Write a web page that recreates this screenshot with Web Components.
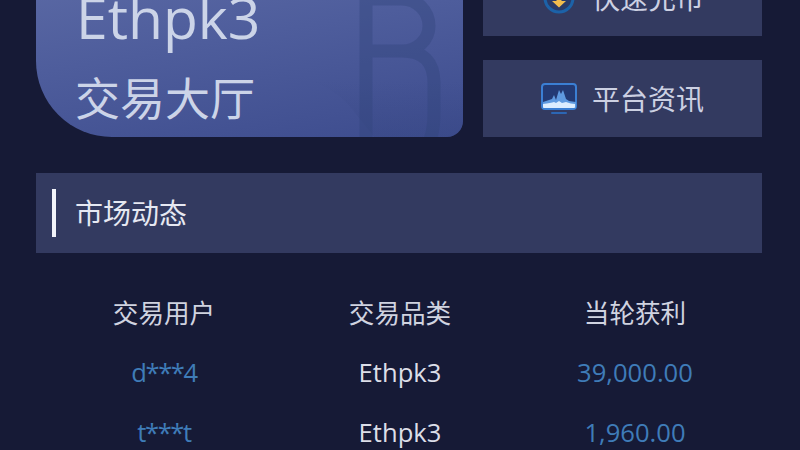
<!DOCTYPE html>
<html lang="zh">
<head>
<meta charset="utf-8">
<title>Ethpk3</title>
<style>
  html, body { margin: 0; height: 100%; background: #161a36; overflow: hidden; }
  body { font-family: "Open Sans", "Noto Sans CJK SC", sans-serif; }
</style>
</head>
<body>
<trade-page>
  <hero-card slot="hero" name="Ethpk3" label="交易大厅"></hero-card>
  <quick-button slot="actions" label="快速充币">
    <svg slot="icon" width="36" height="32" viewBox="0 0 36 32">
      <circle cx="18" cy="16" r="14" fill="#2a3a68" stroke="#1c62a8" stroke-width="3"/>
      <path d="M15.5 12h5v7h4.500l-7 6.500-7-6.500h4.500z" fill="#f2bc4e"/>
    </svg>
  </quick-button>
  <quick-button slot="actions" label="平台资讯">
    <svg slot="icon" width="36" height="32" viewBox="0 0 36 32">
      <rect x="1" y="1" width="34" height="25" rx="3" fill="#233a74" stroke="#3b7fd4" stroke-width="2"/>
      <path d="M2 19l6-2 3-1 2-4 2 5 3-10 2 4 2-4 3 9 3 2 7 1v6H2z" fill="#5f9ae0"/>
      <path d="M2 21q8-1 11-2l2 1 3-2 3 2 4-1q5 2 9 2v3a1 1 0 0 1-1 1H3a1 1 0 0 1-1-1z" fill="#dcedff"/>
      <rect x="10" y="29" width="16" height="2" rx="1" fill="#2c66b4"/>
    </svg>
  </quick-button>
  <section-bar slot="bar" label="市场动态"></section-bar>
  <market-row slot="table" head user="交易用户" item="交易品类" gain="当轮获利"></market-row>
  <market-row slot="table" user="d***4" item="Ethpk3" gain="39,000.00"></market-row>
  <market-row slot="table" user="t***t" item="Ethpk3" gain="1,960.00"></market-row>
</trade-page>

<script>
// page shell: the screenshot is scrolled, so the top row starts above the window
class TradePage extends HTMLElement {
  constructor() {
    super();
    this.attachShadow({ mode: 'open' });
    this.shadowRoot.innerHTML = `
      <style>
        :host { display: block; width: 800px; height: 450px; overflow: hidden; }
        .wrap { margin-top: -41px; padding: 0 38px 0 36px; }
        .top { display: grid; grid-template-columns: 427px 279px; column-gap: 20px; }
        .actions { display: flex; flex-direction: column; gap: 24px; }
        .bar { margin-top: 36px; }
        .table { margin-top: 29px; padding: 0 10px; }
      </style>
      <div class="wrap">
        <div class="top">
          <slot name="hero"></slot>
          <div class="actions"><slot name="actions"></slot></div>
        </div>
        <div class="bar"><slot name="bar"></slot></div>
        <div class="table"><slot name="table"></slot></div>
      </div>
    `;
  }
}

class HeroCard extends HTMLElement {
  constructor() {
    super();
    this.attachShadow({ mode: 'open' });
    this.shadowRoot.innerHTML = `
      <style>
        :host { display: block; position: relative; height: 178px; overflow: hidden;
          border-radius: 0 0 16px 76px;
          background: linear-gradient(170deg, #5d6ba6 0%, #4e5d9c 45%, #3d4c8e 100%); }
        svg { position: absolute; left: 0; top: 0; }
        .txt { position: relative; padding: 22px 0 0 40px; color: #ccd4e8; }
        .name { font-size: 57px; line-height: 72px; }
        .label { font-size: 45px; line-height: 62px; margin-top: 15px; margin-left: -1px; }
      </style>
      <svg width="427" height="178" viewBox="0 0 427 178">
        <defs>
          <linearGradient id="shade" x1="0" y1="0" x2="0" y2="1">
            <stop offset="0" stop-color="#35457f" stop-opacity="0"/>
            <stop offset="1" stop-color="#35457f" stop-opacity=".3"/>
          </linearGradient>
        </defs>
        <path d="M274 122q26 8 42 28t22 28H427V122z" fill="url(#shade)"/>
        <path d="M330 30V200M330 40H366a27 27 0 0 1 27 27a27 25 0 0 1-27 25H330M366 92q32 0 32 32v30q0 46-32 46H330"
          fill="none" stroke="#33447c" stroke-opacity=".42" stroke-width="13"/>
      </svg>
      <div class="txt">
        <div class="name"></div>
        <div class="label"></div>
      </div>
    `;
    this.shadowRoot.querySelector('.name').textContent = this.getAttribute('name');
    this.shadowRoot.querySelector('.label').textContent = this.getAttribute('label');
  }
}

class QuickButton extends HTMLElement {
  constructor() {
    super();
    this.attachShadow({ mode: 'open' });
    this.shadowRoot.innerHTML = `
      <style>
        :host { display: flex; height: 77px; align-items: center; justify-content: center; gap: 15px;
          background: #333a60; color: #ccd0e2; font-size: 28px; }
        .label { line-height: 40px; }
        ::slotted(svg) { display: block; }
      </style>
      <slot name="icon"></slot>
      <span class="label"></span>
    `;
    this.shadowRoot.querySelector('.label').textContent = this.getAttribute('label');
  }
}

class SectionBar extends HTMLElement {
  constructor() {
    super();
    this.attachShadow({ mode: 'open' });
    this.shadowRoot.innerHTML = `
      <style>
        :host { display: flex; align-items: center; height: 80px; padding-left: 16px;
          background: #333a60; color: #e6e8f2; font-size: 28px; }
        i { display: block; width: 4px; height: 48px; background: #f2f3f9; margin-right: 20px; }
        span { margin: -2px 0 0 -1px; }
      </style>
      <i></i><span class="label"></span>
    `;
    this.shadowRoot.querySelector('.label').textContent = this.getAttribute('label');
  }
}

class MarketRow extends HTMLElement {
  constructor() {
    super();
    this.attachShadow({ mode: 'open' });
    this.shadowRoot.innerHTML = `
      <style>
        :host { display: grid; grid-template-columns: 236px 236px 234px; height: 60px;
          align-items: center; text-align: center; font-size: 25.6px; color: #dcdee8; }
        :host([head]) { color: #d0d3e0; }
        .blue { color: #3f7cb8; }
        .user.blue { letter-spacing: -1.4px; }
      </style>
      <span class="user"></span><span class="item"></span><span class="gain"></span>
    `;
    const head = this.hasAttribute('head');
    for (const k of ['user', 'item', 'gain']) {
      const el = this.shadowRoot.querySelector('.' + k);
      el.textContent = this.getAttribute(k);
      if (!head && k !== 'item') el.classList.add('blue');
    }
  }
}

customElements.define('trade-page', TradePage);
customElements.define('hero-card', HeroCard);
customElements.define('quick-button', QuickButton);
customElements.define('section-bar', SectionBar);
customElements.define('market-row', MarketRow);
</script>
</body>
</html>
